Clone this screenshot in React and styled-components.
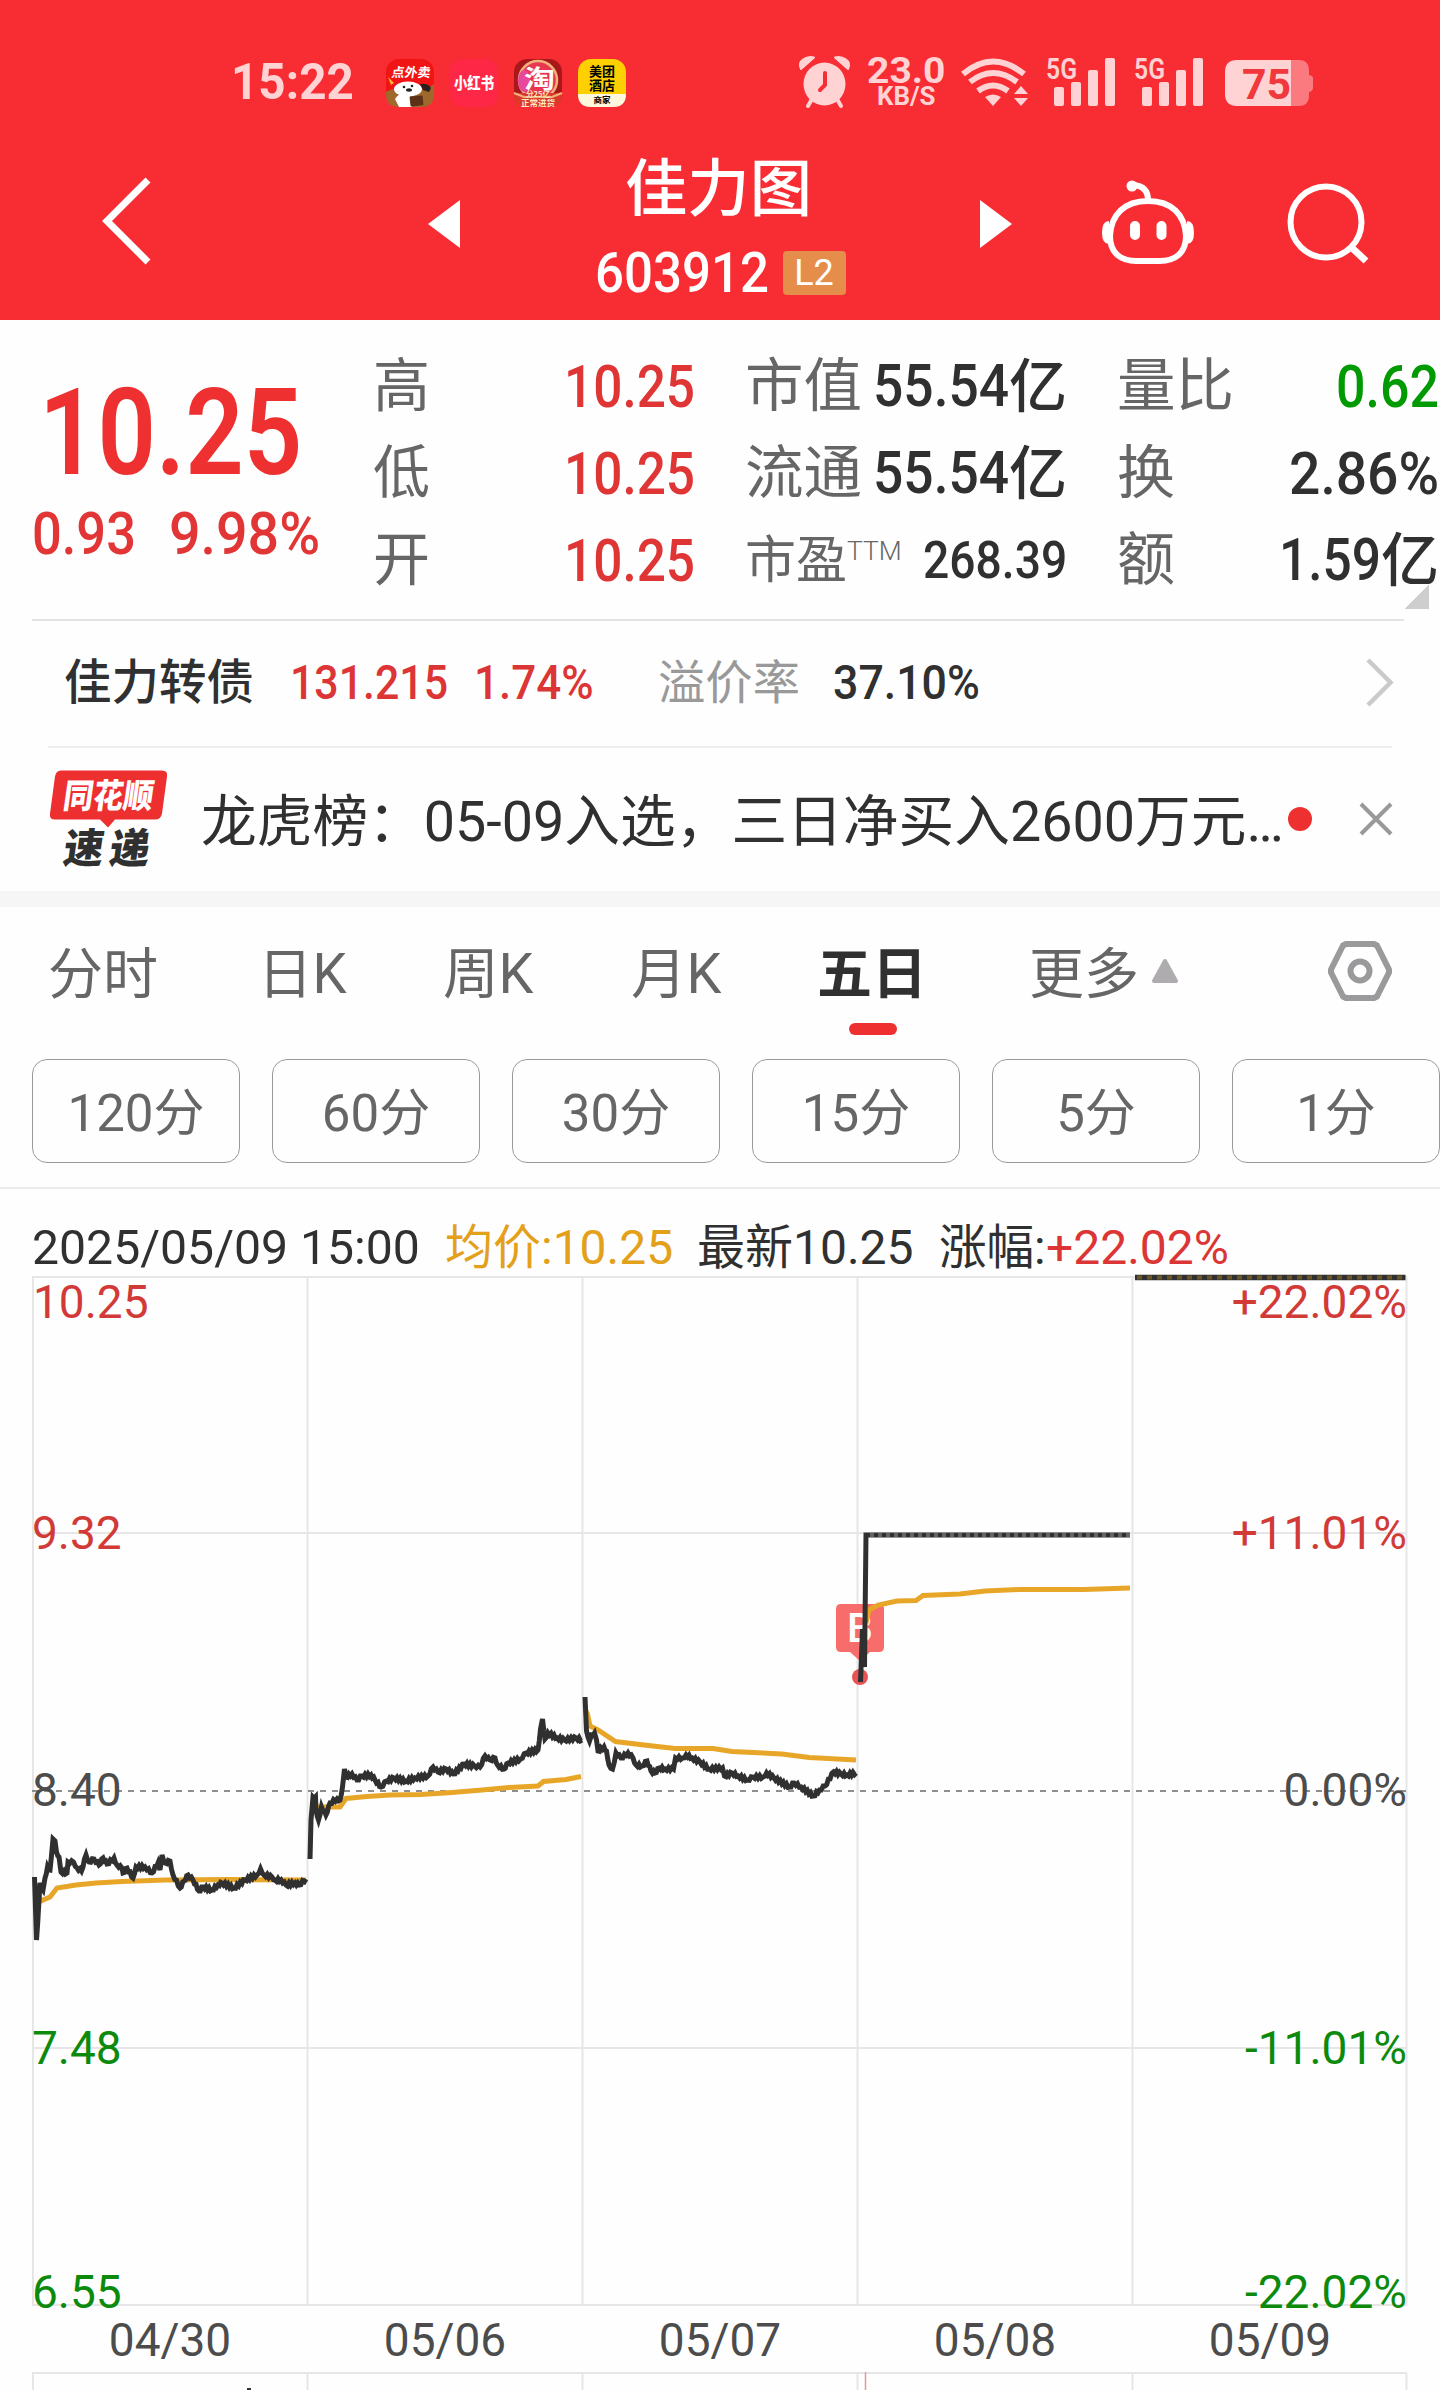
import { useLayoutEffect, useRef, useState } from "react"
import styled, { createGlobalStyle } from "styled-components"

// Squeezes a run of text to the given advance width
const Fit = ({ width, children, ...rest }) => {
  const ref = useRef(null)
  const [scale, setScale] = useState(1)

  useLayoutEffect(() => {
    setScale(width / ref.current.offsetWidth)
  }, [width, children])

  return (
    <FitBox $width={width} {...rest}>
      <FitText ref={ref} style={{ transform: `scaleX(${scale})` }}>
        {children}
      </FitText>
    </FitBox>
  )
}

const stats = [
  [
    { label: "高", labelWidth: 57, value: "10.25", width: 131, tone: "up" },
    { label: "低", labelWidth: 57, value: "10.25", width: 131, tone: "up" },
    { label: "开", labelWidth: 57, value: "10.25", width: 131, tone: "up" },
  ],
  [
    { label: "市值", labelWidth: 117, value: "55.54", width: 136, unit: "亿" },
    { label: "流通", labelWidth: 117, value: "55.54", width: 136, unit: "亿" },
    { label: "市盈", labelWidth: 102, sup: "TTM", value: "268.39", width: 144, small: true },
  ],
  [
    { label: "量比", labelWidth: 117, value: "0.62", width: 103, tone: "down" },
    { label: "换", labelWidth: 58, value: "2.86%", width: 150 },
    { label: "额", labelWidth: 58, value: "1.59", width: 102, unit: "亿" },
  ],
]

const tabs = [
  { text: "分时", width: 110, left: 48 },
  { text: "日K", width: 89, left: 258 },
  { text: "周K", width: 91, left: 443 },
  { text: "月K", width: 91, left: 631 },
  { text: "五日", width: 110, left: 817, active: true },
  { text: "更多", width: 110, left: 1029 },
]

const periods = ["120分", "60分", "30分", "15分", "5分", "1分"]

const dates = ["04/30", "05/06", "05/07", "05/08", "05/09"]

const priceLines = [
  [
    34.5, 1877, 36.5, 1940, 39, 1900, 40, 1883, 43, 1890, 45, 1878, 47.5, 1867, 50, 1870, 53, 1839, 55, 1841,
    56.5, 1852, 59, 1857, 61, 1872, 67, 1873, 68, 1862, 73.5, 1862, 77, 1868, 81.5, 1871, 86, 1855, 89, 1862,
    94, 1859, 99, 1865, 103, 1858, 107, 1864, 114, 1858, 117, 1865, 122, 1868, 123, 1873, 127, 1868, 133, 1878,
    136, 1867, 145, 1867, 152, 1873, 158, 1863, 160, 1870, 162, 1855, 165, 1863, 170, 1861, 173, 1875, 180, 1888,
    184, 1881, 188, 1875, 193, 1880, 199, 1891, 203, 1887, 212, 1890, 218, 1885, 222, 1883, 234, 1888, 245, 1880,
    257, 1875, 260.5, 1869, 264, 1875, 272, 1877, 275, 1880, 281, 1880, 286, 1885, 295, 1883, 299, 1885, 306, 1879,
  ],
  [
    310, 1859, 311, 1820, 313, 1797, 315.5, 1797, 316, 1810, 318.5, 1820, 321.5, 1807, 326, 1815, 330, 1803,
    337, 1799, 340, 1800, 342.5, 1787, 344.5, 1769, 346, 1777, 352, 1774, 357, 1780, 362, 1776, 371, 1775,
    375, 1780, 381, 1787, 386.5, 1781, 394, 1778, 406, 1781, 415, 1778, 428, 1776, 433, 1767, 438, 1772,
    446, 1769, 453.5, 1774, 464, 1764, 474.5, 1766, 480, 1767, 485, 1756, 490, 1760, 495, 1758, 497.5, 1765,
    504, 1769, 508, 1763, 520.5, 1759, 526, 1753, 538, 1750, 540.5, 1729, 542.5, 1719, 545, 1739, 548, 1733,
    557, 1738, 564.5, 1740, 576, 1738, 582, 1740,
  ],
  [
    585, 1697, 586.5, 1731, 589.5, 1741, 591.5, 1735, 594.5, 1733, 596.5, 1740, 598, 1751, 604, 1747, 606.5, 1751,
    609, 1765, 612.5, 1769, 616, 1753, 621, 1758, 628, 1753, 633, 1758, 636, 1765, 642, 1766, 647, 1761, 651, 1771,
    655, 1773, 659, 1768, 665, 1769, 673.5, 1769, 675.5, 1758, 682.5, 1758, 686, 1755, 692, 1758, 700, 1762,
    709, 1769, 722.5, 1768, 724.5, 1776, 732, 1773, 738, 1776, 747.5, 1780, 753, 1777, 763, 1777, 766.5, 1773,
    774, 1778, 789.5, 1787, 794, 1783, 801, 1787, 813.5, 1796, 819.5, 1790, 825, 1786, 833.5, 1772, 841, 1774,
    847, 1775, 856, 1773,
  ],
]

const averageLines = [
  "36,1890 41,1901 50,1897 57,1888 76,1885 96,1883 122,1881.5 165,1880 230,1879.5 306,1880",
  "313,1807 318,1807 340,1807 346,1798.5 367,1796.5 390,1795 421,1794.5 452,1792.5 482,1790 509,1787.5 538,1786 543.5,1781.5 566,1779.5 581,1776.5",
  "585.5,1710 587.5,1714 590,1726 598,1730 615.5,1741.5 644,1745 675,1748.5 713,1748.5 732,1751.5 782,1754 809,1757.5 856,1760",
  "866,1623 869,1610 878,1605 897,1601 916,1600.5 923,1595.5 960,1594 985,1591 1019,1589.5 1084,1589.5 1130,1588",
]

const dayBorders = [33, 307.5, 582.5, 857.5, 1132.5, 1406.5]

const toTickPath = (values) => {
  const out = []
  for (let i = 0; i < values.length - 2; i += 2) {
    const [x0, y0, x1, y1] = values.slice(i, i + 4)
    const steps = Math.max(1, Math.round((x1 - x0) / 1.6))
    for (let s = 0; s < steps; s++) {
      const t = s / steps
      const flicker = s === 0 ? 0 : s % 2 ? 1.3 : -1.3
      out.push(`${(x0 + (x1 - x0) * t).toFixed(1)},${(y0 + (y1 - y0) * t + flicker).toFixed(1)}`)
    }
  }
  out.push(values.slice(-2).join(","))
  return out.join(" ")
}

const AlarmIcon = () => (
  <svg width="50" height="52" viewBox="799 56 50 52" fill="#ffd2d4">
    <ellipse cx="824.5" cy="84" rx="21" ry="21.5" />
    <path d="M801 69q-3-6 2-9.500t11-2zM848 69q3-6-2-9.500t-11-2z" stroke="#ffd2d4" strokeWidth="2" strokeLinejoin="round" />
    <path d="M812 99l-4 7M837 99l4 7" stroke="#ffd2d4" strokeWidth="4" strokeLinecap="round" />
    <path d="M825 73v12l-5 5" fill="none" stroke="#f82d33" strokeWidth="4" strokeLinecap="round" />
  </svg>
)

const WifiIcon = () => (
  <svg width="68" height="52" viewBox="961 56 68 52" fill="none" stroke="#ffd2d4" strokeWidth="6">
    <path d="M963 74q30-25 61 0M970 82q23-18 47 0M978 91q15-11 30 0" />
    <path d="M985 97q8-5 16 0l-8 9z" fill="#ffd2d4" stroke="none" />
    <path d="M1014 94l7-8 7 8zM1014 98l7 8 7-8z" fill="#ffd2d4" stroke="none" />
  </svg>
)

const SignalIcon = () => (
  <svg width="68" height="52" viewBox="1047 56 68 52" fill="#ffd2d4">
    <text x="1046" y="78.500" fontFamily="Roboto" fontWeight="600" fontSize="30" textLength="31" lengthAdjust="spacingAndGlyphs">
      5G
    </text>
    <rect x="1054" y="87" width="10" height="19" rx="2" />
    <rect x="1071" y="82" width="10" height="24" rx="2" />
    <rect x="1088" y="70" width="10" height="36" rx="2" />
    <rect x="1105" y="58" width="10" height="48" rx="2" />
  </svg>
)

const BatteryIcon = () => (
  <svg width="90" height="52" viewBox="1224 56 90 52">
    <path d="M1291 60h8q10 0 10 11v4q4 1 4 3v10q0 3-4 4v3q0 11-10 11h-8z" fill="#fb7a80" />
    <path d="M1291 60h-54q-12 0-12 12v22q0 12 12 12h54z" fill="#ffd2d4" />
    <text x="1242" y="99" fontFamily="Roboto" fontWeight="700" fontSize="42" fill="#f0383d" textLength="49" lengthAdjust="spacingAndGlyphs">
      75
    </text>
  </svg>
)

const FoodApp = () => (
  <svg width="48" height="48" viewBox="0 0 48 48">
    <rect width="48" height="48" rx="13" fill="#f01414" />
    <path d="M0 33q10-6 24-3t24-5v10q0 13-13 13H13Q0 48 0 35z" fill="#a0692c" />
    <path d="M2 18l6 6-3 2z" fill="#f8b62a" />
    <ellipse cx="22" cy="30" rx="14" ry="7.500" fill="#fff" />
    <path d="M9 40q7-10 15-4l2 12H13z" fill="#fff" />
    <path d="M34 25q8-1 11 4l-2 4-6-2z" fill="#2a211f" />
    <circle cx="18" cy="28" r="1.300" fill="#222" />
    <circle cx="26" cy="27" r="1.300" fill="#222" />
    <ellipse cx="23" cy="31" rx="3" ry="1.700" fill="#222" />
    <rect x="24" y="37" width="13" height="10" rx="1" fill="#5b3118" transform="rotate(-6 30 42)" />
    <text fontFamily="Noto Sans CJK SC" fontWeight="700" fontSize="13" fill="#fff" transform="translate(5 17.500) skewX(-8)">点外卖</text>
  </svg>
)

const RedBookApp = () => (
  <svg width="48" height="48" viewBox="0 0 48 48">
    <rect width="48" height="48" rx="13" fill="#fe2745" />
    <text x="4" y="30" fontFamily="Noto Sans CJK SC" fontWeight="900" fontSize="15.500" fill="#fff" textLength="40" lengthAdjust="spacingAndGlyphs">小红书</text>
  </svg>
)

const TaoApp = () => (
  <svg width="48" height="48" viewBox="0 0 48 48">
    <rect width="48" height="48" rx="13" fill="#a8171a" />
    <path d="M24 1l5 7h-10z" fill="#f2b27c" />
    <circle cx="24" cy="21" r="19" fill="#e8384f" stroke="#f2b27c" strokeWidth="2.500" />
    <ellipse cx="10" cy="22" rx="6" ry="11" fill="#e6489c" />
    <path d="M0 34h48v4q-3 10-13 10H13Q2 48 0 38z" fill="#d83a2c" />
    <path d="M0 34l10 4h28l10-4" fill="none" stroke="#f2b27c" strokeWidth="2" />
    <text x="10" y="29" fontFamily="Noto Sans CJK SC" fontWeight="700" fontSize="25" fill="#fff" textLength="31" lengthAdjust="spacingAndGlyphs">淘</text>
    <text x="24" y="37.500" textAnchor="middle" fontFamily="Noto Sans CJK SC" fontWeight="700" fontSize="7.500" fill="#ffe5c4">分25亿</text>
    <text x="24" y="46.500" textAnchor="middle" fontFamily="Noto Sans CJK SC" fontWeight="700" fontSize="8.500" fill="#ffe5c4">正常进货</text>
  </svg>
)

const HotelApp = () => (
  <svg width="48" height="48" viewBox="0 0 48 48" fontFamily="Noto Sans CJK SC" fontWeight="700" textAnchor="middle">
    <rect width="48" height="48" rx="13" fill="#ffd000" />
    <path d="M0 35h48q0 13-13 13H13Q0 48 0 35z" fill="#fff8de" />
    <text x="24" y="16.500" fontSize="13">美团</text>
    <text x="24" y="31" fontSize="13">酒店</text>
    <text x="24" y="44" fontSize="8.500">商家</text>
  </svg>
)

const BackIcon = () => (
  <svg width="56" height="92" viewBox="98 176 56 92" fill="none" stroke="#fff" strokeWidth="7">
    <path d="M148 180l-41 41 41 41" />
  </svg>
)

const PrevIcon = () => (
  <svg width="32" height="92" viewBox="428 176 32 92">
    <path d="M460 200v48l-32-24z" fill="#fff" />
  </svg>
)

const NextIcon = () => (
  <svg width="32" height="92" viewBox="980 176 32 92">
    <path d="M980 200v48l32-24z" fill="#fff" />
  </svg>
)

const RobotIcon = () => (
  <svg width="94" height="92" viewBox="1101 176 94 92" fill="none" stroke="#fff" strokeWidth="6">
    <path d="M1148 201c24 0 37 14 38 35 0 18-12 25-26 25h-24c-14 0-26-7-26-25 1-21 14-35 38-35z" />
    <path d="M1148 200q0-14-15-15" />
    <circle cx="1132" cy="186" r="5.500" fill="#fff" stroke="none" />
    <path d="M1109 221q-7 0-7 11.500t7 11.500zM1187 221q7 0 7 11.500t-7 11.500z" fill="#fff" stroke="none" />
    <path d="M1135 226v9M1161.500 226v9" strokeWidth="10" strokeLinecap="round" />
  </svg>
)

const SearchIcon = () => (
  <svg width="82" height="92" viewBox="1287 176 82 92" fill="none" stroke="#fff" strokeWidth="6">
    <circle cx="1326" cy="222" r="35.500" />
    <path d="M1351 247l15 14" strokeWidth="7" />
  </svg>
)

const ExpressLogo = () => (
  <svg width="120" height="100" viewBox="48 770.500 120 100" fontFamily="Noto Sans CJK SC" fontWeight="900">
    <path d="M61 771h101q6 0 5 6l-5 37q-1 6-7 6h-40l-7 8-8-8H55q-6 0-5-6l5-37q1-6 6-6z" fill="#ee2f30" />
    <text fontSize="34" textLength="90" lengthAdjust="spacingAndGlyphs" fill="#fff" transform="translate(62 808) skewX(-8)">同花顺</text>
    <text fontSize="41" textLength="40" lengthAdjust="spacingAndGlyphs" fill="#303030" transform="translate(62 863) skewX(-8)">速</text>
    <text fontSize="41" textLength="40" lengthAdjust="spacingAndGlyphs" fill="#303030" transform="translate(108 863) skewX(-8)">递</text>
  </svg>
)

const SettingsIcon = () => (
  <svg width="66" height="64" viewBox="1327 939 66 64" fill="none" stroke="#9a999b" strokeWidth="6" strokeLinejoin="round">
    <path d="M1346 944h28l3 1.500 12 24v3l-12 24-3 1.500h-28l-3-1.500-12-24v-3l12-24z" />
    <circle cx="1360" cy="971" r="9.500" />
  </svg>
)

const Chart = () => (
  <svg width="1440" height="1126" viewBox="0 1264 1440 1126" fontFamily="Roboto" fontSize="46">
    <g stroke="#e6e6e6" strokeWidth="2">
      {[1277, 1533, 2048, 2305, 2373].map((y) => (
        <path key={y} d={`M32 ${y}H1407`} />
      ))}
      {dayBorders.map((x) => (
        <path key={x} d={`M${x} 1277V2305M${x} 2373V2390`} />
      ))}
    </g>
    <path d="M32 1791H1407" stroke="#8e8e8e" strokeWidth="2" strokeDasharray="6 6" />
    <path d="M865.500 2372v18" stroke="#e09a98" strokeWidth="1.500" />
    <path d="M247 2389h4" stroke="#333" strokeWidth="2" />

    <g fill="#d23a38">
      <text x="33" y="1318">10.25</text>
      <text x="32" y="1549">9.32</text>
      <text x="1407" y="1318" textAnchor="end">+22.02%</text>
      <text x="1407" y="1549" textAnchor="end">+11.01%</text>
    </g>
    <g fill="#4c4c4c">
      <text x="32" y="1806">8.40</text>
      <text x="1407" y="1806" textAnchor="end">0.00%</text>
      {dates.map((date, i) => (
        <text key={date} x={170 + i * 275} y="2356" textAnchor="middle">{date}</text>
      ))}
    </g>
    <g fill="#0c8a0c">
      <text x="32" y="2064">7.48</text>
      <text x="32" y="2308">6.55</text>
      <text x="1407" y="2064" textAnchor="end">-11.01%</text>
      <text x="1407" y="2308" textAnchor="end">-22.02%</text>
    </g>

    <path d="M841 1604h38q5 0 5 5v38q0 5-5 5h-9l-10 9-10-9h-9q-5 0-5-5v-38q0-5 5-5z" fill="#f76d6c" />
    <text x="847" y="1642" fontSize="41" fontWeight="500" fill="#fff">B</text>
    <circle cx="860" cy="1677" r="8" fill="#e85454" />

    <g fill="none" stroke="#e8a629" strokeWidth="5">
      {averageLines.map((points) => (
        <polyline key={points} points={points} />
      ))}
    </g>
    <g fill="none" stroke="#303030" strokeWidth="5">
      {priceLines.map((values) => (
        <polyline key={values[0]} points={toTickPath(values)} />
      ))}
      <path d="M860.500 1682l2-53 2 38 1.500-132V1535H1130" />
      <path d="M1135 1277.500H1405.500" strokeWidth="5.500" />
    </g>
    <path d="M870 1535H1130" stroke="#646464" strokeWidth="4" strokeDasharray="4 4" />
    <path d="M1137 1277.500H1405" stroke="#6e5526" strokeWidth="4" strokeDasharray="5 5" />
  </svg>
)

export default function App() {
  return (
    <Page>
      <GlobalStyle />
      <Header>
        <StatusBar>
          <Clock width={123}>15:22</Clock>
          <AppIcons>
            <FoodApp />
            <RedBookApp />
            <TaoApp />
            <HotelApp />
          </AppIcons>
          <AlarmIcon />
          <NetSpeed>
            <Speed width={78}>23.0</Speed>
            <SpeedUnit width={59}>KB/S</SpeedUnit>
          </NetSpeed>
          <WifiIcon />
          <Signals>
            <SignalIcon />
            <SignalIcon />
          </Signals>
          <BatteryIcon />
        </StatusBar>
        <Nav>
          <BackIcon />
          <NavStep>
            <PrevIcon />
          </NavStep>
          <StockTitle>
            <StockName width={187}>佳力图</StockName>
            <CodeRow>
              <StockCode width={174}>603912</StockCode>
              <LevelBadge>L2</LevelBadge>
            </CodeRow>
          </StockTitle>
          <NextIcon />
          <NavTools>
            <RobotIcon />
            <SearchIcon />
          </NavTools>
        </Nav>
      </Header>

      <Quote>
        <PriceBlock>
          <Price width={263}>10.25</Price>
          <ChangeRow>
            <Change width={104}>0.93</Change>
            <Change width={151}>9.98%</Change>
          </ChangeRow>
        </PriceBlock>
        <Stats>
          {stats.map((column, i) => (
            <StatColumn key={i}>
              {column.map((stat) => (
                <StatRow key={stat.label}>
                  <StatLabel width={stat.labelWidth} $small={stat.small}>{stat.label}</StatLabel>
                  {stat.sup && <StatSup width={55}>{stat.sup}</StatSup>}
                  <StatValue $tone={stat.tone} $small={stat.small}>
                    <Fit width={stat.width}>{stat.value}</Fit>
                    {stat.unit && <StatUnit width={58}>{stat.unit}</StatUnit>}
                  </StatValue>
                </StatRow>
              ))}
            </StatColumn>
          ))}
        </Stats>
        <Corner />
      </Quote>

      <BondRow>
        <BondName width={190}>佳力转债</BondName>
        <BondNumber width={158} $left={36} $up>131.215</BondNumber>
        <BondNumber width={120} $left={26} $up>1.74%</BondNumber>
        <PremiumLabel width={142}>溢价率</PremiumLabel>
        <BondNumber width={147} $left={33}>37.10%</BondNumber>
        <ArrowSlot>
          <svg width="30" height="52" viewBox="1366 655 30 52" fill="none" stroke="#cacaca" strokeWidth="4.500">
            <path d="M1369 658l22.500 22.500L1369 703" />
          </svg>
        </ArrowSlot>
      </BondRow>

      <NewsRow>
        <ExpressLogo />
        <NewsText width={1083}>龙虎榜：05-09入选，三日净买入2600万元…</NewsText>
        <UnreadDot />
        <CloseIcon width="34" height="34" viewBox="0 0 34 34" stroke="#999" strokeWidth="4">
          <path d="M2 2l30 30M32 2L2 32" />
        </CloseIcon>
      </NewsRow>

      <Band />

      <Tabs>
        {tabs.map((tab, i) => (
          <Tab key={tab.text} $active={tab.active} $gap={i ? tab.left - tabs[i - 1].left - tabs[i - 1].width : tab.left}>
            <Fit width={tab.width}>{tab.text}</Fit>
          </Tab>
        ))}
        <MoreArrow width="28" height="26" viewBox="0 0 28 26">
          <path d="M14 3l11 20H3z" fill="#aeacae" stroke="#aeacae" strokeWidth="4" strokeLinejoin="round" />
        </MoreArrow>
        <SettingsIcon />
      </Tabs>

      <Periods>
        {periods.map((period) => (
          <Period key={period}>{period}</Period>
        ))}
      </Periods>

      <Summary>
        <SummaryItem width={388} $left={32}>2025/05/09 15:00</SummaryItem>
        <SummaryItem width={228} $left={25} $color="#e3a01b">均价:10.25</SummaryItem>
        <SummaryItem width={217} $left={24}>最新10.25</SummaryItem>
        <SummaryItem width={107} $left={25}>涨幅:</SummaryItem>
        <SummaryItem width={183} $left={0} $color="#dc3535">+22.02%</SummaryItem>
      </Summary>

      <ChartArea>
        <Chart />
      </ChartArea>
    </Page>
  )
}

const GlobalStyle = createGlobalStyle`
  body {
    margin: 0;
    background: #fff;
  }
`

const Page = styled.div`
  width: 1440px;
  height: 2390px;
  overflow: hidden;
  background: #fefefe;
  color: #303030;
  font-family: Roboto, "Noto Sans CJK SC", sans-serif;

  svg {
    display: block;
    flex: none;
    overflow: visible;
  }
`

const FitBox = styled.span`
  display: block;
  flex: none;
  width: ${(props) => props.$width}px;
  white-space: nowrap;
`

const FitText = styled.span`
  display: inline-block;
  transform-origin: left center;
`

const Header = styled.div`
  height: 320px;
  box-sizing: border-box;
  padding-top: 56px;
  background: #f82d33;
  color: #fff;
`

const StatusBar = styled.div`
  display: flex;
  align-items: center;
  height: 52px;
  padding-left: 231px;
  color: #ffd2d4;
`

const Clock = styled(Fit)`
  font-size: 50px;
  font-weight: 700;
  line-height: 54px;
`

const AppIcons = styled.div`
  display: flex;
  gap: 16px;
  margin: 2px 173px 0 32px;
`

const NetSpeed = styled.div`
  display: flex;
  flex-direction: column;
  align-items: center;
  width: 78px;
  margin: 0 16px 0 18px;
`

const Speed = styled(Fit)`
  font-size: 37px;
  font-weight: 700;
  line-height: 30px;
`

const SpeedUnit = styled(Fit)`
  font-size: 25px;
  font-weight: 700;
  line-height: 22px;
`

const Signals = styled.div`
  display: flex;
  gap: 20px;
  margin: 0 21px 0 18px;
`

const Nav = styled.div`
  display: flex;
  align-items: flex-start;
  height: 144px;
  padding: 68px 0 0 98px;
`

const NavStep = styled.div`
  margin-left: 274px;
`

const StockTitle = styled.div`
  display: flex;
  flex-direction: column;
  align-items: center;
  width: 520px;
  margin-top: -32px;
`

const StockName = styled(Fit)`
  margin-right: 4px;
  font-size: 62px;
  font-weight: 500;
  line-height: 92px;
`

const CodeRow = styled.div`
  display: flex;
  align-items: center;
  gap: 14px;
  height: 74px;
`

const StockCode = styled(Fit)`
  font-size: 56px;
  font-weight: 500;
  line-height: 74px;
`

const LevelBadge = styled.div`
  width: 63px;
  height: 44px;
  border-radius: 4px;
  background: #e58e4c;
  font-size: 36px;
  line-height: 44px;
  text-align: center;
`

const NavTools = styled.div`
  display: flex;
  gap: 92px;
  margin-left: 89px;
`

const Quote = styled.div`
  position: relative;
  display: flex;
  height: 299px;
  margin-left: 32px;

  &::after {
    content: "";
    position: absolute;
    left: 0;
    bottom: -2px;
    width: 1372px;
    height: 2px;
    background: #e3e3e3;
  }
`

const PriceBlock = styled.div`
  flex: none;
  width: 342px;
  color: #ee3030;
`

const Price = styled(Fit)`
  margin: 51px 0 0 7px;
  font-size: 120px;
  font-weight: 600;
  line-height: 124px;
`

const ChangeRow = styled.div`
  display: flex;
  gap: 33px;
  color: #e23636;
`

const Change = styled(Fit)`
  font-size: 60px;
  font-weight: 500;
  line-height: 77px;
`

const Stats = styled.div`
  display: flex;
  gap: 51px;
  padding-top: 23px;
`

const StatColumn = styled.div`
  flex: none;
  width: 321px;
`

const StatRow = styled.div`
  display: flex;
  align-items: center;
  height: 87px;
`

const StatLabel = styled(Fit)`
  margin-left: -1px;
  font-size: ${(props) => (props.$small ? 51 : 58)}px;
  line-height: 91px;
  color: #666;
`

const StatSup = styled(Fit)`
  margin-top: -20px;
  font-size: 26px;
  font-weight: 300;
  line-height: 30px;
  color: #666;
`

const tones = { up: "#e03535", down: "#029a02" }

const StatValue = styled.div`
  display: flex;
  margin-left: auto;
  font-size: ${(props) => (props.$small ? 52 : 60)}px;
  font-weight: 500;
  line-height: 87px;
  color: ${(props) => tones[props.$tone] || "#303030"};
`

const StatUnit = styled(Fit)`
  font-size: 58px;
  line-height: 90px;
`

const Corner = styled.div`
  position: absolute;
  left: 1373px;
  top: 265px;
  width: 24px;
  height: 24px;
  background: linear-gradient(135deg, transparent 50%, #cecece 50%);
`

const BondRow = styled.div`
  display: flex;
  align-items: center;
  height: 127px;
  margin: 0 48px;
  padding-left: 16px;
  border-bottom: 2px solid #eee;
  line-height: 60px;
`

const BondName = styled(Fit)`
  font-size: 48px;
  font-weight: 500;
`

const BondNumber = styled(Fit)`
  margin-left: ${(props) => props.$left}px;
  font-size: 48px;
  font-weight: 500;
  color: ${(props) => (props.$up ? "#dc3535" : "#303030")};
`

const PremiumLabel = styled(Fit)`
  margin-left: 64px;
  font-size: 47px;
  color: #999;
`

const ArrowSlot = styled.div`
  margin: 0 -3px 0 auto;
`

const NewsRow = styled.div`
  display: flex;
  align-items: center;
  height: 143px;
  padding-left: 48px;
`

const NewsText = styled(Fit)`
  margin: 4px 0 0 33px;
  font-size: 56px;
  line-height: 72px;
`

const UnreadDot = styled.div`
  width: 24px;
  height: 24px;
  margin: -2px 47px 0 4px;
  border-radius: 50%;
  background: #ee3030;
`

const CloseIcon = styled.svg`
  margin-top: -2px;
`

const Band = styled.div`
  height: 16px;
  background: #f6f6f6;
`

const Tabs = styled.div`
  display: flex;
  align-items: center;
  height: 128px;
`

const Tab = styled.div`
  position: relative;
  height: 128px;
  margin-left: ${(props) => props.$gap}px;
  font-size: 55px;
  font-weight: ${(props) => (props.$active ? 700 : 400)};
  line-height: 134px;
  color: ${(props) => (props.$active ? "#303030" : "#666")};

  &::after {
    content: "";
    display: ${(props) => (props.$active ? "block" : "none")};
    position: absolute;
    left: 32px;
    bottom: 0;
    width: 48px;
    height: 12px;
    border-radius: 6px;
    background: #ee3030;
  }
`

const MoreArrow = styled.svg`
  margin: 0 148px 0 12px;
`

const Periods = styled.div`
  display: flex;
  gap: 32px;
  height: 128px;
  padding: 24px 0 0 32px;
  border-bottom: 2px solid #ebebeb;
`

const Period = styled.div`
  flex: none;
  box-sizing: border-box;
  width: 208px;
  height: 104px;
  border: 1.5px solid #999;
  border-radius: 15px;
  font-size: 51px;
  line-height: 107px;
  text-align: center;
  color: #666;
`

const Summary = styled.div`
  display: flex;
  align-items: center;
  height: 75px;
`

const SummaryItem = styled(Fit)`
  margin-left: ${(props) => props.$left}px;
  padding-top: 42px;
  font-size: 48px;
  line-height: 60px;
  color: ${(props) => props.$color || "#303030"};
`

const ChartArea = styled.div`
  height: 1126px;
`
